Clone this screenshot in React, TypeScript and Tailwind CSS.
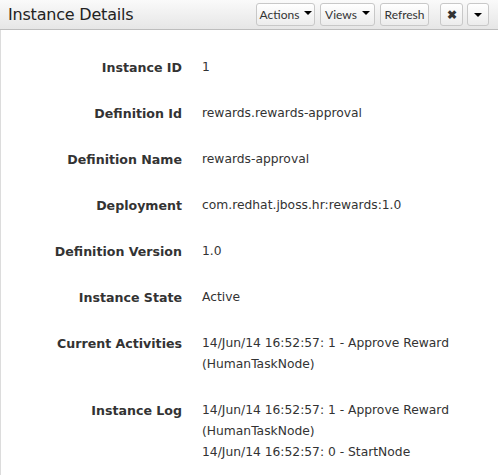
import React from 'react';

const rows: { label: string; lines: string[] }[] = [
  { label: 'Instance ID', lines: ['1'] },
  { label: 'Definition Id', lines: ['rewards.rewards-approval'] },
  { label: 'Definition Name', lines: ['rewards-approval'] },
  { label: 'Deployment', lines: ['com.redhat.jboss.hr:rewards:1.0'] },
  { label: 'Definition Version', lines: ['1.0'] },
  { label: 'Instance State', lines: ['Active'] },
  { label: 'Current Activities', lines: ['14/Jun/14 16:52:57: 1 - Approve Reward', '(HumanTaskNode)'] },
  {
    label: 'Instance Log',
    lines: ['14/Jun/14 16:52:57: 1 - Approve Reward', '(HumanTaskNode)', '14/Jun/14 16:52:57: 0 - StartNode'],
  },
];

const Caret = () => (
  <span className="inline-block ml-[5px] align-middle border-l-[4px] border-r-[4px] border-t-[4px] border-l-transparent border-r-transparent border-t-black relative top-[-2px]" />
);

const Btn: React.FC<{ children: React.ReactNode; className?: string }> = ({ children, className }) => (
  <button
    className={`h-[23px] rounded-[3px] border border-[#c8c8c8] bg-gradient-to-b from-white to-[#ececec] text-[12px] text-[#333] flex items-center justify-center ${className ?? ''}`}
  >
    {children}
  </button>
);

export default function App() {
  return (
    <div className="w-[498px] h-[475px] bg-white overflow-hidden" style={{ fontFamily: 'Lato, sans-serif' }}>
      <div className="h-[30px] flex items-center justify-between bg-gradient-to-b from-[#fafafa] to-[#e6e6e6] border-b border-[#bdbdbd] pl-[8px] pr-[9px]">
        <div className="text-[16px] text-[#222] leading-none font-['Verdana','DejaVu_Sans',sans-serif] tracking-[-0.2px]">Instance Details</div>
        <div className="flex items-center">
          <Btn className="w-[59px] pl-[1px]">Actions<Caret /></Btn>
          <Btn className="w-[55px] ml-[5px]">Views<Caret /></Btn>
          <Btn className="w-[49px] ml-[5px]">Refresh</Btn>
          <Btn className="w-[23px] ml-[11px] font-bold text-[12px] text-[#222]">✖</Btn>
          <Btn className="w-[22px] ml-[4px]"><span className="inline-block border-l-[4px] border-r-[4px] border-t-[4px] border-l-transparent border-r-transparent border-t-black" /></Btn>
        </div>
      </div>
      <div className="h-[445px] border-l border-[#dcdcdc] pt-[27px] text-[12.3px] text-[#333] font-['DejaVu_Sans',sans-serif]">
        {rows.map((r) => (
          <div key={r.label} className="flex mb-[25px] leading-[21px]">
            <div className="w-[181px] shrink-0 text-right font-bold text-[12.6px]">{r.label}</div>
            <div className="ml-[20px]">
              {r.lines.map((l, i) => (
                <div key={i}>{l}</div>
              ))}
            </div>
          </div>
        ))}
      </div>
    </div>
  );
}
